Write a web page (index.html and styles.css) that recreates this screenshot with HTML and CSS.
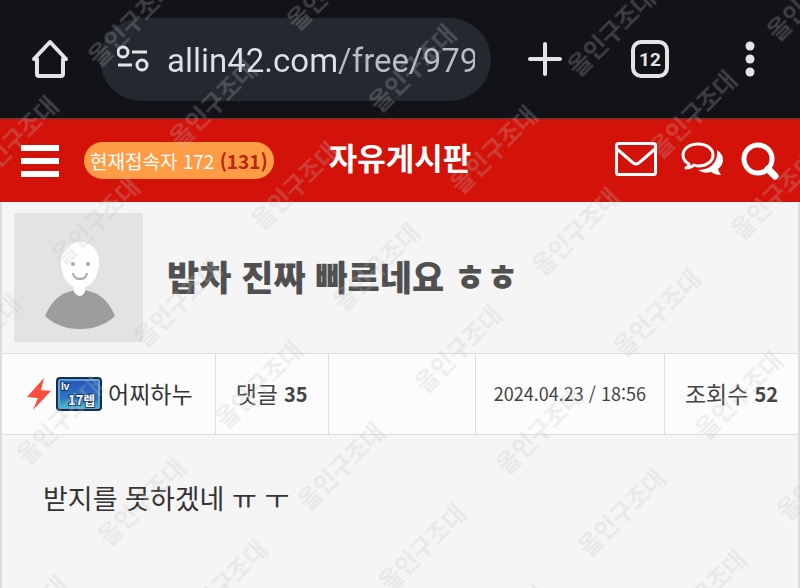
FILE: index.html
```html
<!DOCTYPE html>
<html lang="ko">
<head>
    <meta charset="UTF-8">
    <meta name="viewport" content="width=device-width, initial-scale=1.0">
    <title>자유게시판</title>
    <link rel="stylesheet" href="styles.css">
</head>
<body>
    <div class="browser-bar">
        <button class="icon-button" aria-label="Home">
            <svg width="40" height="40" viewBox="0 0 40 40" fill="none" stroke="#e3e3e8" stroke-width="4" stroke-linecap="round" stroke-linejoin="round">
                <path d="M4 20 L20 3 L36 20 H33 V35 Q33 37 31 37 H9 Q7 37 7 35 V20 Z"/>
            </svg>
        </button>
        <div class="address">
            <svg width="32" height="28" viewBox="0 0 32 28" fill="none" stroke="#e3e3e8" stroke-width="3">
                <circle cx="6" cy="7" r="5"/>
                <path d="M15 7 H30 M1 20 H15"/>
                <circle cx="25" cy="20" r="5"/>
            </svg>
            <input class="address-input" type="text" aria-label="Address" value="allin42.com/free/979">
        </div>
        <button class="icon-button plus" aria-label="New tab">
            <svg width="36" height="36" viewBox="0 0 36 36" stroke="#e3e3e8" stroke-width="4" stroke-linecap="round">
                <path d="M18 3 V33 M3 18 H33"/>
            </svg>
        </button>
        <button class="icon-button tab-count">12</button>
        <button class="icon-button more" aria-label="Menu">
            <svg width="10" height="36" viewBox="0 0 10 36" fill="#e3e3e8">
                <circle cx="5" cy="5" r="4.5"/>
                <circle cx="5" cy="18" r="4.5"/>
                <circle cx="5" cy="31" r="4.5"/>
            </svg>
        </button>
    </div>

    <header class="site-header">
        <div class="header-left">
            <button class="icon-button" aria-label="메뉴">
                <svg width="38" height="32" viewBox="0 0 38 32" fill="#fff">
                    <path d="M0 0 H38 V6 H0 Z M0 13 H38 V19 H0 Z M0 26 H38 V32 H0 Z"/>
                </svg>
            </button>
            <a class="visitors" href="#">현재접속자 172 <strong>(131)</strong></a>
        </div>
        <h1 class="board-name">자유게시판</h1>
        <div class="header-right">
            <button class="icon-button" aria-label="쪽지">
                <svg width="48" height="34" viewBox="0 0 48 34" fill="none" stroke="#fff" stroke-width="3" stroke-linejoin="round">
                    <rect x="1.5" y="1.5" width="39" height="31" rx="2"/>
                    <path d="M2 7 L17 20 Q21 24 25 20 L40 7"/>
                </svg>
            </button>
            <button class="icon-button" aria-label="채팅">
                <svg width="42" height="34" viewBox="0 0 42 34">
                    <path d="M36 8 Q42 12 42 18 Q42 23 37 27 Q38 30 40 33 Q34 33 30 30 Q22 32 17 28 Q28 28 33 21 Q37 15 36 8 Z" fill="#fff"/>
                    <path d="M17 2 C8 2 2 7 2 13 C2 17 4 20 8 22 Q8 25 5 26 Q10 26 13 23 Q15 24 17 24 C26 24 32 19 32 13 C32 7 26 2 17 2 Z" fill="none" stroke="#fff" stroke-width="3" stroke-linejoin="round"/>
                </svg>
            </button>
            <button class="icon-button" aria-label="검색">
                <svg width="38" height="38" viewBox="0 0 38 38" fill="none" stroke="#fff">
                    <circle cx="17" cy="17" r="14" stroke-width="5"/>
                    <path d="M27 27 L34 34" stroke-width="7" stroke-linecap="round"/>
                </svg>
            </button>
        </div>
    </header>

    <main class="post">
        <div class="post-head">
            <svg class="avatar" width="129" height="129" viewBox="0 0 129 129">
                <rect width="129" height="129" fill="#e3e3e3"/>
                <path d="M31 103 Q42 77 66 77 Q90 77 101 103 Q87 116 66 116 Q45 116 31 103 Z" fill="#9c9c9c"/>
                <path d="M60 70 H71 V79 Q66 87 60 79 Z" fill="#fff"/>
                <path d="M66 29 C78 29 85 38 85 50 C85 64 76 75 66 75 C55 75 47 64 47 50 C47 38 54 29 66 29 Z" fill="#fff"/>
                <circle cx="59" cy="51" r="2" fill="#aaa"/>
                <circle cx="74" cy="51" r="2" fill="#aaa"/>
                <path d="M59 60 Q60 66 66 66 Q72 66 73 60" fill="none" stroke="#aaa" stroke-width="2"/>
            </svg>
            <h2 class="post-title">밥차 진짜 빠르네요 ㅎㅎ</h2>
        </div>
        <div class="post-info">
            <div class="info-cell author">
                <svg width="26" height="34" viewBox="0 0 26 34">
                    <path d="M18 1 L1 20 L12 21 L7 33 L25 14 L15 13 Z" fill="#fb4c3c"/>
                </svg>
                <svg class="level" width="46" height="34" viewBox="0 0 46 34">
                    <defs>
                        <linearGradient id="level-bg" x1="0" y1="0" x2="0" y2="1">
                            <stop offset="0" stop-color="#2458b8"/>
                            <stop offset="0.7" stop-color="#2e78c4"/>
                            <stop offset="1" stop-color="#38bcc0"/>
                        </linearGradient>
                    </defs>
                    <rect x="1" y="1" width="44" height="32" rx="3" fill="#5ba4d8" stroke="#182c50" stroke-width="2"/>
                    <rect x="4" y="4" width="38" height="26" fill="url(#level-bg)"/>
                    <text class="level-text level-label" x="5" y="13">lv</text>
                    <text class="level-text" x="12" y="28">17렙</text>
                </svg>
                <a class="author-name" href="#">어찌하누</a>
            </div>
            <div class="info-cell comments">댓글 <strong>35</strong></div>
            <div class="info-cell blank"></div>
            <div class="info-cell date">2024.04.23 / 18:56</div>
            <div class="info-cell views">조회수 <strong>52</strong></div>
        </div>
        <p class="post-body">받지를 못하겠네 ㅠ ㅜ</p>
    </main>

    <svg class="watermark" aria-hidden="true">
        <defs>
            <pattern id="mark" patternUnits="userSpaceOnUse" width="166" height="231" patternTransform="translate(32 40) rotate(-45)">
                <text x="83" y="67">올인구조대</text>
                <text x="83" y="182">올인구조대</text>
            </pattern>
        </defs>
        <rect width="100%" height="100%" fill="url(#mark)"/>
    </svg>
</body>
</html>
```
FILE: styles.css
```css
* {
    box-sizing: border-box;
}
body {
    font-family: "Noto Sans CJK KR", sans-serif;
    margin: 0;
    min-height: 100vh;
    display: flex;
    flex-direction: column;
    background-color: #f5f5f5;
    color: #333;
}
svg {
    display: block;
    flex-shrink: 0;
}
a {
    color: inherit;
    text-decoration: none;
}
.icon-button {
    padding: 0;
    border: none;
    background: none;
    color: #e3e3e8;
    flex-shrink: 0;
    cursor: pointer;
}

/* browser toolbar */
.browser-bar {
    display: flex;
    align-items: center;
    height: 118px;
    padding: 0 45px 0 30px;
    background-color: #121317;
}
.address {
    flex: 1;
    min-width: 0;
    display: flex;
    align-items: center;
    gap: 18px;
    height: 83px;
    margin: 0 36px 0 30px;
    padding: 0 16px 0 17px;
    border-radius: 42px;
    background-color: #242830;
}
.address-input {
    flex: 1;
    min-width: 0;
    padding: 3px 0 0;
    border: none;
    outline: none;
    font-family: Roboto, sans-serif;
    font-size: 33px;
    line-height: 44px;
    color: transparent;
    background: linear-gradient(to right, #e0e1e8 172px, #b9bcc6 172px);
    -webkit-background-clip: text;
    background-clip: text;
}
.tab-count {
    width: 38px;
    height: 38px;
    margin: 0 76px 0 68px;
    border: 4px solid #e3e3e8;
    border-radius: 10px;
    font: bold 19px Roboto, sans-serif;
}

/* site header */
.site-header {
    display: grid;
    grid-template-columns: 1fr auto 1fr;
    align-items: center;
    height: 84px;
    padding: 0 21px;
    border-top: 1px solid #5a3a3c;
    background-color: #d3120a;
    color: #fff;
}
.header-left {
    display: flex;
    align-items: center;
    gap: 25px;
}
.header-right {
    display: flex;
    align-items: flex-start;
    justify-content: flex-end;
    gap: 18px;
}
.visitors {
    padding: 0 6px;
    border-radius: 19px;
    background-color: #ff9c45;
    font-size: 19px;
    line-height: 37px;
    white-space: nowrap;
}
.visitors strong {
    color: #b8240c;
}
.board-name {
    margin: 0;
    padding-bottom: 8px;
    font-size: 31px;
    line-height: 40px;
}

/* post */
.post {
    flex: 1;
    border: 1px solid #ddd;
    border-width: 0 2px;
}
.post-head {
    display: flex;
    align-items: center;
    gap: 24px;
    padding: 11px 12px;
}
.post-title {
    margin: 0;
    padding-bottom: 4px;
    font-size: 35px;
    font-weight: 900;
    line-height: 44px;
    color: #505050;
}
.post-info {
    display: flex;
    border: 1px solid #ddd;
    border-width: 1px 0;
    background-color: #fcfcfc;
}
.info-cell {
    display: flex;
    align-items: center;
    gap: 6px;
    height: 80px;
    padding: 0 20px 2px;
    border-right: 1px solid #ddd;
    font-size: 23px;
    white-space: nowrap;
    color: #444;
}
.info-cell:last-child {
    border-right: none;
}
.info-cell strong {
    font-size: 20px;
}
.author {
    padding: 0 22px 0 24px;
    gap: 4px;
}
.author-name {
    margin-left: 2px;
    padding-bottom: 2px;
    color: #333;
}
.level-text {
    font-size: 13px;
    font-weight: bold;
    fill: #fff;
    stroke: #173a78;
    stroke-width: 2px;
    paint-order: stroke;
}
.level-label {
    font-family: "Liberation Sans", sans-serif;
    font-size: 10px;
}
.blank {
    flex: 1;
}
.date {
    padding: 0 18px 2px;
    font-size: 18px;
}
.post-body {
    margin: 0;
    padding: 42px 41px;
    font-size: 27px;
    line-height: 42px;
    color: #333;
}

/* repeated mark over the whole page */
.watermark {
    position: absolute;
    top: 0;
    left: 0;
    width: 100%;
    height: 100%;
    pointer-events: none;
}
.watermark text {
    font-size: 24px;
    font-weight: bold;
    text-anchor: middle;
    fill: #c0c0c0;
    fill-opacity: 0.25;
}
```
